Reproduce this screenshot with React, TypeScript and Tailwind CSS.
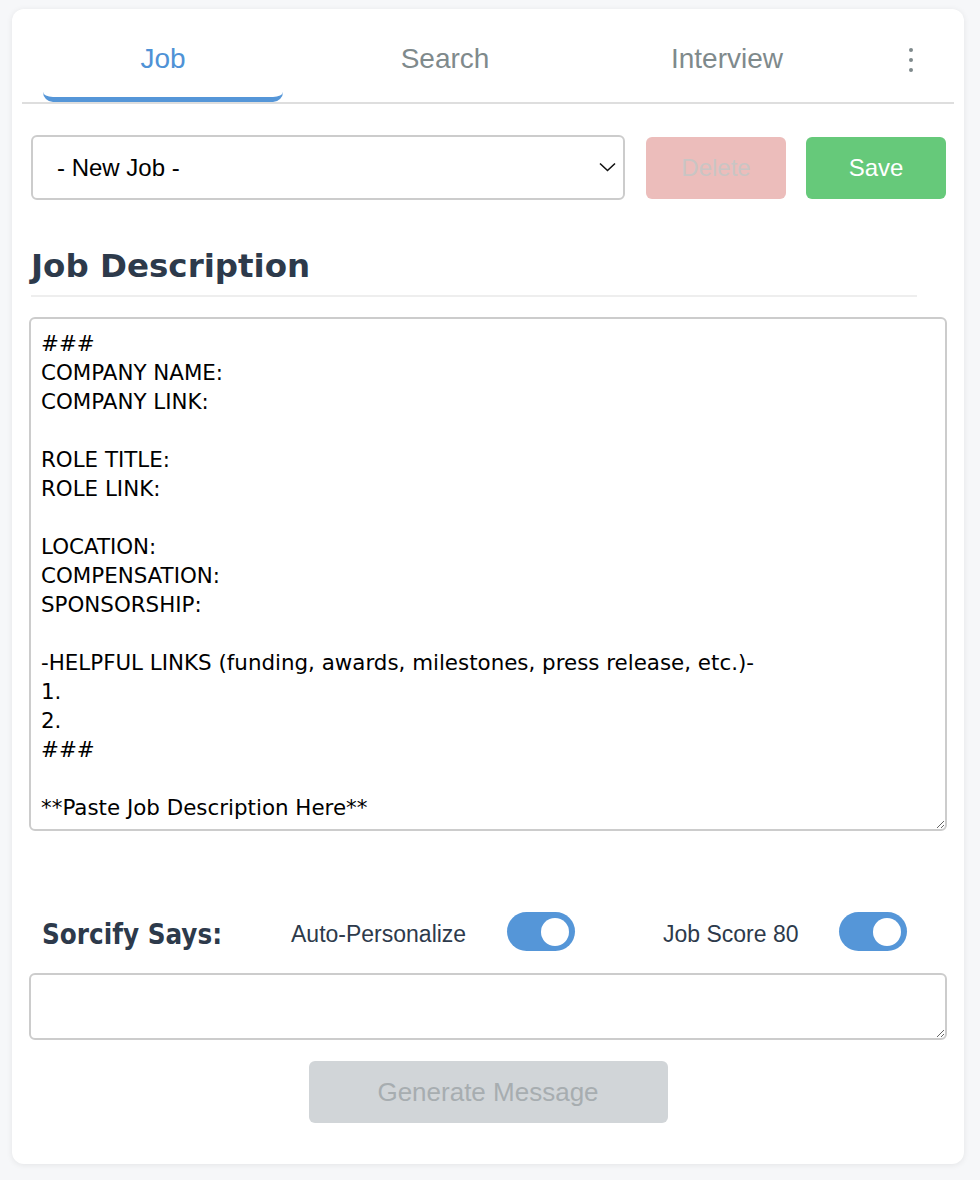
import { useState } from 'react';

const template = `###
COMPANY NAME:
COMPANY LINK:

ROLE TITLE:
ROLE LINK:

LOCATION:
COMPENSATION:
SPONSORSHIP:

-HELPFUL LINKS (funding, awards, milestones, press release, etc.)-
1.
2.
###

**Paste Job Description Here**`;

function Toggle({ on, onChange }: { on: boolean; onChange: () => void }) {
  return (
    <button
      onClick={onChange}
      className={`w-[68px] h-[39px] rounded-full flex items-center px-[6px] shrink-0 ${on ? 'bg-[#5596d8] justify-end' : 'bg-[#cfd4d8] justify-start'}`}
    >
      <span className="w-[28px] h-[28px] rounded-full bg-white" />
    </button>
  );
}

export default function App() {
  const [tab, setTab] = useState('Job');
  const [autoPersonalize, setAutoPersonalize] = useState(true);
  const [jobScore, setJobScore] = useState(true);

  const tabs = ['Job', 'Search', 'Interview'];

  return (
    <div className="min-h-[1180px] bg-[#f6f7f9] pt-[9px] px-[12px] font-['Liberation_Sans',Arial,sans-serif]">
      <div className="w-[952px] h-[1155px] bg-white rounded-[12px] shadow-[0_1px_6px_rgba(0,0,0,0.08)] flex flex-col">
        {/* Tabs */}
        <div className="mx-[10px] pt-[11px] flex border-b-2 border-[#dedede]">
          {tabs.map(t => (
            <div key={t} className="w-[282px] px-[21px]">
              <button
                onClick={() => setTab(t)}
                className={`w-full h-[82px] text-[28px] rounded-[10px] border-b-[5px] ${tab === t ? 'text-[#4f92d6] border-[#5596d8]' : 'text-[#7f8a8c] border-transparent'}`}
              >
                {t}
              </button>
            </div>
          ))}
          <div className="flex-1 flex flex-col items-center pt-[28px] gap-[6px]">
            <span className="w-[4px] h-[4px] rounded-full bg-[#7f8a8c]" />
            <span className="w-[4px] h-[4px] rounded-full bg-[#7f8a8c]" />
            <span className="w-[4px] h-[4px] rounded-full bg-[#7f8a8c]" />
          </div>
        </div>

        {/* Job picker */}
        <div className="flex items-center mt-[31px] pl-[19px] pr-[18px]">
          <div className="relative w-[594px] h-[65px]">
            <select className="appearance-none w-full h-full border-2 border-[#cccccc] rounded-[6px] bg-white pl-[24px] text-[24px] text-black outline-none">
              <option>- New Job -</option>
            </select>
            <svg className="absolute right-[9px] top-[27px] pointer-events-none" width="17" height="10" viewBox="0 0 17 10" fill="none">
              <path d="M1 1.5 L8.5 8.5 L16 1.5" stroke="#111" strokeWidth="1.6" />
            </svg>
          </div>
          <button disabled className="ml-[21px] w-[140px] h-[62px] rounded-[6px] bg-[#ecbdbb] text-[#c9c5c4] text-[24px]">
            Delete
          </button>
          <button className="ml-[20px] w-[140px] h-[62px] rounded-[6px] bg-[#66c97a] text-white text-[24px]">
            Save
          </button>
        </div>

        {/* Description */}
        <h2 className="mt-[46px] ml-[19px] mr-[47px] pb-[9px] border-b-2 border-[#eeeeee] text-[32.5px] leading-[40px] font-bold text-[#2d3a4b] font-['DejaVu_Sans',Verdana,sans-serif]">
          Job Description
        </h2>

        <textarea
          defaultValue={template}
          className="mt-[20px] ml-[17px] w-[918px] h-[514px] border-2 border-[#cccccc] rounded-[6px] px-[10px] pt-[10px] pb-[10px] text-[21.4px] leading-[29px] text-black outline-none resize-y font-['DejaVu_Sans',Verdana,sans-serif]"
        />

        {/* Sorcify says */}
        <div className="mt-[81px] pl-[30px] flex items-center h-[39px]">
          <span className="w-[249px] pt-[6px] text-[27.5px] font-bold text-[#2d3a4b] font-['DejaVu_Sans',Verdana,sans-serif] font-stretch-condensed">
            Sorcify Says:
          </span>
          <span className="w-[216px] pt-[6px] text-[23px] text-[#2d3a4b]">Auto-Personalize</span>
          <Toggle on={autoPersonalize} onChange={() => setAutoPersonalize(!autoPersonalize)} />
          <span className="ml-[88px] w-[176px] pt-[6px] text-[23px] text-[#2d3a4b]">Job Score 80</span>
          <Toggle on={jobScore} onChange={() => setJobScore(!jobScore)} />
        </div>

        <textarea className="mt-[22px] ml-[17px] w-[918px] h-[67px] border-2 border-[#cccccc] rounded-[6px] p-[10px] text-[20px] outline-none" />

        <div className="mt-[21px] flex justify-center">
          <button disabled className="w-[359px] h-[62px] rounded-[6px] bg-[#d1d5d8] text-[#a7adb0] text-[26px]">
            Generate Message
          </button>
        </div>
      </div>
    </div>
  );
}
